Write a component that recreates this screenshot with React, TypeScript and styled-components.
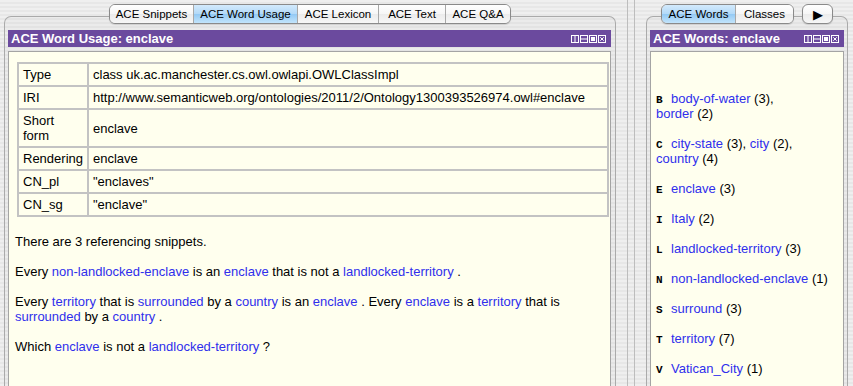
import React from 'react';
import styled, {createGlobalStyle, css} from 'styled-components';

const GlobalStyle = createGlobalStyle`
  html, body {
    margin: 0;
    padding: 0;
  }
  body {
    font-family: "Liberation Sans", Arial, sans-serif;
    color: #000;
  }
`;

const PURPLE = '#6b4a9e';
const CREAM = '#ffffee';
const LINK = '#2f2fec';

interface Tab {
    readonly label: string;
    readonly width: number;
    readonly active?: boolean;
}

const leftTabs: Tab[] = [
    {label: 'ACE Snippets', width: 83},
    {label: 'ACE Word Usage', width: 104, active: true},
    {label: 'ACE Lexicon', width: 81},
    {label: 'ACE Text', width: 67},
    {label: 'ACE Q&A', width: 65},
];

const rightTabs: Tab[] = [
    {label: 'ACE Words', width: 73, active: true},
    {label: 'Classes', width: 58},
];

const properties: Array<[string, string]> = [
    ['Type', 'class uk.ac.manchester.cs.owl.owlapi.OWLClassImpl'],
    ['IRI', 'http://www.semanticweb.org/ontologies/2011/2/Ontology1300393526974.owl#enclave'],
    ['Short form', 'enclave'],
    ['Rendering', 'enclave'],
    ['CN_pl', '"enclaves"'],
    ['CN_sg', '"enclave"'],
];

// words in [brackets] are rendered as links
const snippets = [
    'There are 3 referencing snippets.',
    'Every [non-landlocked-enclave] is an [enclave] that is not a [landlocked-territory] .',
    'Every [territory] that is [surrounded] by a [country] is an [enclave] . Every [enclave] is a [territory] that is [surrounded] by a [country] .',
    'Which [enclave] is not a [landlocked-territory] ?',
];

const wordIndex: Array<{letter: string; words: Array<[string, number]>}> = [
    {letter: 'B', words: [['body-of-water', 3], ['border', 2]]},
    {letter: 'C', words: [['city-state', 3], ['city', 2], ['country', 4]]},
    {letter: 'E', words: [['enclave', 3]]},
    {letter: 'I', words: [['Italy', 2]]},
    {letter: 'L', words: [['landlocked-territory', 3]]},
    {letter: 'N', words: [['non-landlocked-enclave', 1]]},
    {letter: 'S', words: [['surround', 3]]},
    {letter: 'T', words: [['territory', 7]]},
    {letter: 'V', words: [['Vatican_City', 1]]},
];

const Window = styled.div`
  width: 853px;
  height: 386px;
  overflow: hidden;
  box-sizing: border-box;
  padding-left: 4px;
  display: flex;
  background: repeating-linear-gradient(to bottom, #efefef 0, #efefef 2px, #e7e7e7 2px, #e7e7e7 4px);
`;

const Pane = styled.div<{ $width: number }>`
  width: ${p => p.$width}px;
  flex-shrink: 0;
  display: flex;
  flex-direction: column;
`;

const TabStrip = styled.div`
  position: relative;
  z-index: 1;
  height: 20px;
  margin-top: 4px;
  margin-bottom: -8px;
  display: flex;
  justify-content: center;
  gap: 8px;
`;

const TabGroup = styled.div`
  display: flex;
  height: 20px;
  box-sizing: border-box;
  border: 1px solid #8a8a8a;
  border-radius: 6px;
  overflow: hidden;
  box-shadow: 0 1px 1px rgba(0, 0, 0, 0.12);
`;

const TabButton = styled.div<{ $width: number; $active?: boolean }>`
  width: ${p => p.$width}px;
  box-sizing: border-box;
  display: flex;
  align-items: center;
  justify-content: center;
  font-size: 11.5px;
  background: linear-gradient(#ffffff, #f6f6f6 50%, #ebebeb 51%, #f7f7f7);

  & + & {
    border-left: 1px solid #a8a8a8;
  }

  ${p => p.$active && css`
    background: linear-gradient(#d3eafc, #b2d9f8 50%, #93c9f4 51%, #c2e4fb);
  `}
`;

const ArrowButton = styled(TabGroup)`
  width: 31px;
  align-items: center;
  justify-content: center;
  background: linear-gradient(#ffffff, #f6f6f6 50%, #ebebeb 51%, #f7f7f7);
  font-size: 13px;
`;

const Frame = styled.div<{ $padRight: number }>`
  flex: 1;
  min-height: 0;
  display: flex;
  flex-direction: column;
  gap: 4px;
  padding: 13px ${p => p.$padRight}px 0 3px;
  border: 1px solid #aaaaaa;
  border-bottom: none;
  border-radius: 7px 7px 0 0;
  background: rgba(0, 0, 0, 0.015);
`;

const TitleBar = styled.div`
  height: 17px;
  flex-shrink: 0;
  display: flex;
  align-items: center;
  justify-content: space-between;
  padding: 0 5px 0 3px;
  background: ${PURPLE};
  color: #fff;
  font-size: 13px;
  font-weight: bold;
`;

const IconRow = styled.div`
  display: flex;
  gap: 1px;
`;

const Content = styled.div<{ $pad: string }>`
  flex: 1;
  min-height: 0;
  overflow: hidden;
  padding: ${p => p.$pad};
  border: 1px solid #a4a4a4;
  border-bottom: none;
  background: ${CREAM};
  font-size: 13px;
  line-height: 15px;
`;

const InfoTable = styled.table`
  width: calc(100% - 1px);
  margin-left: 2px;
  border-collapse: collapse;
  font-size: 13px;
  line-height: 15px;
`;

const Cell = styled.td<{ $label?: boolean }>`
  border: 2px solid #c3c3c3;
  padding: 3px 4px;
  vertical-align: middle;
  ${p => p.$label && css`
    width: 58px;
  `}
`;

const Paragraph = styled.p<{ $first?: boolean }>`
  margin: ${p => (p.$first ? '17px' : '15px')} 0 0;
`;

const Word = styled.span`
  color: ${LINK};
`;

const IndexEntry = styled.p`
  margin: 15px 0 0;
`;

const WordGroup = styled.span`
  white-space: nowrap;
`;

const Letter = styled.span`
  display: inline-block;
  width: 15px;
  line-height: 1;
  font-family: "Liberation Mono", "DejaVu Sans Mono", monospace;
  font-size: 11px;
  font-weight: bold;
`;

const Divider = styled.div`
  width: 30px;
  flex-shrink: 0;
  display: flex;
  justify-content: center;
`;

const DividerGrip = styled.div`
  width: 6px;
  border-left: 1px solid #bdbdbd;
  border-right: 1px solid #bdbdbd;
`;

function PaneIcons() {
    return (
        <IconRow>
            <svg width="8" height="8" viewBox="0 0 8 8">
                <rect x="0.5" y="0.5" width="7" height="7" fill="none" stroke="#fff"/>
                <rect x="3.5" y="0" width="1" height="8" fill="#fff"/>
            </svg>
            <svg width="8" height="8" viewBox="0 0 8 8">
                <rect x="0.5" y="0.5" width="7" height="7" fill="none" stroke="#fff"/>
                <rect x="0" y="3.5" width="8" height="1" fill="#fff"/>
            </svg>
            <svg width="8" height="8" viewBox="0 0 8 8">
                <rect x="0.5" y="0.5" width="7" height="7" fill="none" stroke="#fff"/>
                <rect x="2" y="2" width="4" height="4" fill="#fff"/>
            </svg>
            <svg width="8" height="8" viewBox="0 0 8 8">
                <rect x="0.5" y="0.5" width="7" height="7" fill="none" stroke="#fff"/>
                <path d="M2.3 2.3 L5.7 5.7 M5.7 2.3 L2.3 5.7" stroke="#fff" strokeWidth="1"/>
            </svg>
        </IconRow>
    );
}

function Tabs({tabs, arrow}: {tabs: Tab[]; arrow?: boolean}) {
    return (
        <TabStrip>
            <TabGroup>
                {tabs.map(t => (
                    <TabButton key={t.label} $width={t.width} $active={t.active}>{t.label}</TabButton>
                ))}
            </TabGroup>
            {arrow && <ArrowButton>&#9654;</ArrowButton>}
        </TabStrip>
    );
}

function Sentence({text, first}: {text: string; first?: boolean}) {
    const parts = text.split(/(\[[^\]]+\])/).filter(s => s.length > 0);
    return (
        <Paragraph $first={first}>
            {parts.map((part, i) =>
                part.startsWith('[') ? <Word key={i}>{part.slice(1, -1)}</Word> : <React.Fragment key={i}>{part}</React.Fragment>
            )}
        </Paragraph>
    );
}

export default function App() {
    return (
        <>
            <GlobalStyle/>
            <Window>
                <Pane $width={612}>
                    <Tabs tabs={leftTabs}/>
                    <Frame $padRight={4}>
                        <TitleBar>
                            <span>ACE Word Usage: enclave</span>
                            <PaneIcons/>
                        </TitleBar>
                        <Content $pad="10px 2px 0 6px">
                            <InfoTable>
                                <tbody>
                                {properties.map(([key, value]) => (
                                    <tr key={key}>
                                        <Cell $label>{key}</Cell>
                                        <Cell>{value}</Cell>
                                    </tr>
                                ))}
                                </tbody>
                            </InfoTable>
                            {snippets.map((s, i) => <Sentence key={i} text={s} first={i === 0}/>)}
                        </Content>
                    </Frame>
                </Pane>

                <Divider>
                    <DividerGrip/>
                </Divider>

                <Pane $width={202}>
                    <Tabs tabs={rightTabs} arrow/>
                    <Frame $padRight={3}>
                        <TitleBar>
                            <span>ACE Words: enclave</span>
                            <PaneIcons/>
                        </TitleBar>
                        <Content $pad="24px 10px 0 5px">
                            {wordIndex.map(entry => (
                                <IndexEntry key={entry.letter}>
                                    <Letter>{entry.letter}</Letter>
                                    {entry.words.map(([w, n], i) => (
                                        <React.Fragment key={w}>
                                            {i > 0 && ' '}
                                            <WordGroup>
                                                <Word>{w}</Word> ({n}){i < entry.words.length - 1 ? ',' : ''}
                                            </WordGroup>
                                        </React.Fragment>
                                    ))}
                                </IndexEntry>
                            ))}
                        </Content>
                    </Frame>
                </Pane>
            </Window>
        </>
    );
}
